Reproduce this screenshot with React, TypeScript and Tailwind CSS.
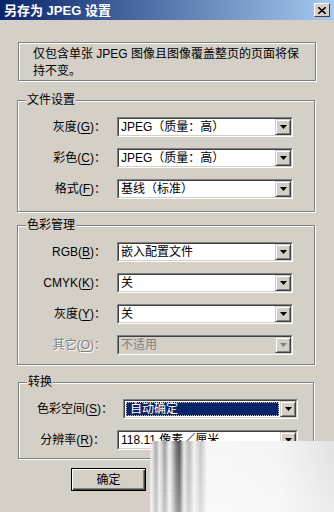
import type { ReactNode } from 'react';

const etched = 'border border-[#808080] shadow-[inset_1px_1px_0_#fff,1px_1px_0_#fff]';

function Arrow({ disabled }: { disabled?: boolean }) {
    return (
        <div className="w-[16px] h-full bg-[#d4d0c8] border border-t-[#d4d0c8] border-l-[#d4d0c8] border-b-[#404040] border-r-[#404040] shadow-[inset_1px_1px_0_#fff,inset_-1px_-1px_0_#808080] flex items-center justify-center">
            <svg width="7" height="4" viewBox="0 0 7 4">
                <polygon points="0,0 7,0 3.5,4" fill={disabled ? '#808080' : '#000'} />
            </svg>
        </div>
    );
}

interface SelectProps {
    width: string;
    text: string;
    selected?: boolean;
    disabled?: boolean;
}

function Select({ width, text, selected, disabled }: SelectProps) {
    return (
        <div className={`${width} h-[20px] border border-t-[#808080] border-l-[#808080] border-b-white border-r-white`}>
            <div
                className={`h-full flex border border-t-[#404040] border-l-[#404040] border-b-[#d4d0c8] border-r-[#d4d0c8] ${
                    disabled ? 'bg-[#d4d0c8]' : 'bg-white'
                }`}
            >
                {selected ? (
                    <div className="flex-1 m-[1px] border border-dotted border-[#c8c8c8] bg-[#0a246a] text-white flex items-center pl-[3px] leading-none">
                        {text}
                    </div>
                ) : (
                    <div
                        className={`flex-1 flex items-center pl-[2px] leading-none ${
                            disabled ? 'text-[#808080]' : 'text-black'
                        }`}
                    >
                        {text}
                    </div>
                )}
                <Arrow disabled={disabled} />
            </div>
        </div>
    );
}

function Label({ text, hot, width, disabled }: { text: string; hot: string; width: string; disabled?: boolean }) {
    return (
        <div
            className={`${width} text-right whitespace-nowrap ${
                disabled ? 'text-[#808080] [text-shadow:1px_1px_0_#fff]' : 'text-black'
            }`}
        >
            {text}(<span className="underline underline-offset-2">{hot}</span>)：
        </div>
    );
}

function Group({ title, className, children }: { title: string; className: string; children: ReactNode }) {
    return (
        <div className={`relative ${etched} ${className}`}>
            <span className="absolute -top-[8px] left-[8px] px-[1px] bg-[#d4d0c8] leading-[14px]">{title}</span>
            {children}
        </div>
    );
}

export default function App() {
    return (
        <div className="relative w-[334px] h-[512px] overflow-hidden bg-[#d4d0c8] text-[12px] text-black font-['Liberation_Sans','Noto_Sans_CJK_SC',sans-serif]">
            {/* title bar */}
            <div className="h-[20px] flex items-center justify-between pl-[4px] pr-[4px] bg-[linear-gradient(to_right,#0a246a,#a6caf0)]">
                <span className="text-white font-bold text-[13px] leading-none">另存为 JPEG 设置</span>
                <div className="w-[16px] h-[14px] bg-[#d4d0c8] border border-t-white border-l-white border-b-[#404040] border-r-[#404040] flex items-center justify-center">
                    <svg width="8" height="7" viewBox="0 0 8 7">
                        <path d="M0 0 L8 7 M8 0 L0 7" stroke="#000" strokeWidth="1.6" />
                    </svg>
                </div>
            </div>

            {/* info */}
            <div className={`mt-[22px] ml-[18px] w-[298px] h-[39px] ${etched} pl-[14px] pt-[3px] leading-[17px] whitespace-nowrap`}>
                <div>仅包含单张 JPEG 图像且图像覆盖整页的页面将保</div>
                <div>持不变。</div>
            </div>

            <Group title="文件设置" className="mt-[19px] ml-[17px] w-[298px] pt-[16px] pb-[12px] flex flex-col gap-[11px]">
                {[
                    ['灰度', 'G', 'JPEG（质量：高）'],
                    ['彩色', 'C', 'JPEG（质量：高）'],
                    ['格式', 'F', '基线（标准）'],
                ].map(([t, h, v]) => (
                    <div key={h} className="flex items-center">
                        <Label text={t} hot={h} width="w-[88px]" />
                        <div className="ml-[11px]">
                            <Select width="w-[176px]" text={v} />
                        </div>
                    </div>
                ))}
            </Group>

            <Group title="色彩管理" className="mt-[13px] ml-[17px] w-[298px] pt-[16px] pb-[9px] flex flex-col gap-[11px]">
                {[
                    ['RGB', 'B', '嵌入配置文件'],
                    ['CMYK', 'K', '关'],
                    ['灰度', 'Y', '关'],
                ].map(([t, h, v]) => (
                    <div key={h} className="flex items-center">
                        <Label text={t} hot={h} width="w-[88px]" />
                        <div className="ml-[11px]">
                            <Select width="w-[176px]" text={v} />
                        </div>
                    </div>
                ))}
                <div className="flex items-center">
                    <Label text="其它" hot="O" width="w-[88px]" disabled />
                    <div className="ml-[11px]">
                        <Select width="w-[176px]" text="不适用" disabled />
                    </div>
                </div>
            </Group>

            <Group title="转换" className="mt-[17px] ml-[18px] w-[296px] pt-[16px] pb-[8px] flex flex-col gap-[11px]">
                <div className="flex items-center">
                    <Label text="色彩空间" hot="S" width="w-[94px]" />
                    <div className="ml-[10px]">
                        <Select width="w-[175px]" text="自动确定" selected />
                    </div>
                </div>
                <div className="flex items-center">
                    <Label text="分辨率" hot="R" width="w-[86px]" />
                    <div className="ml-[12px]">
                        <Select width="w-[181px]" text="118.11 像素／厘米" />
                    </div>
                </div>
            </Group>

            <div className="mt-[9px] ml-[71px] flex gap-[12px]">
                <button
                    type="button"
                    className="w-[75px] h-[23px] border border-black bg-[#d4d0c8] shadow-[inset_1px_1px_0_#fff,inset_-1px_-1px_0_#404040,inset_-2px_-2px_0_#808080] flex items-center justify-center leading-none"
                >
                    确定
                </button>
                <button
                    type="button"
                    className="w-[75px] h-[23px] border border-t-white border-l-white border-b-[#404040] border-r-[#404040] bg-[#d4d0c8] flex items-center justify-center leading-none"
                >
                    取消
                </button>
            </div>

            {/* smeared watermark over the bottom right */}
            <div className="absolute left-[150px] top-[441px] w-[184px] h-[71px] bg-[linear-gradient(to_right,rgba(245,245,245,0.6),#f7f7f7_35%,#f4f4f4_70%,#e2e2e2)]" />
            <div className="absolute left-[152px] top-[441px] w-[64px] h-[71px] opacity-80 bg-[linear-gradient(to_right,#e8e8e8_0,#9a9a9a_6%,#ededed_12%,#8a8a8a_20%,#f2f2f2_27%,#c8c8c8_31%,#555_38%,#2e2e2e_43%,#e6e6e6_50%,#a8a8a8_58%,#f3f3f3_66%,#bdbdbd_76%,#f7f7f7_86%,#f7f7f7_100%)]" />
            <div className="absolute left-[150px] top-[441px] w-[184px] h-[71px] bg-[linear-gradient(to_bottom,rgba(255,255,255,0),rgba(255,255,255,0.35))]" />
        </div>
    );
}
